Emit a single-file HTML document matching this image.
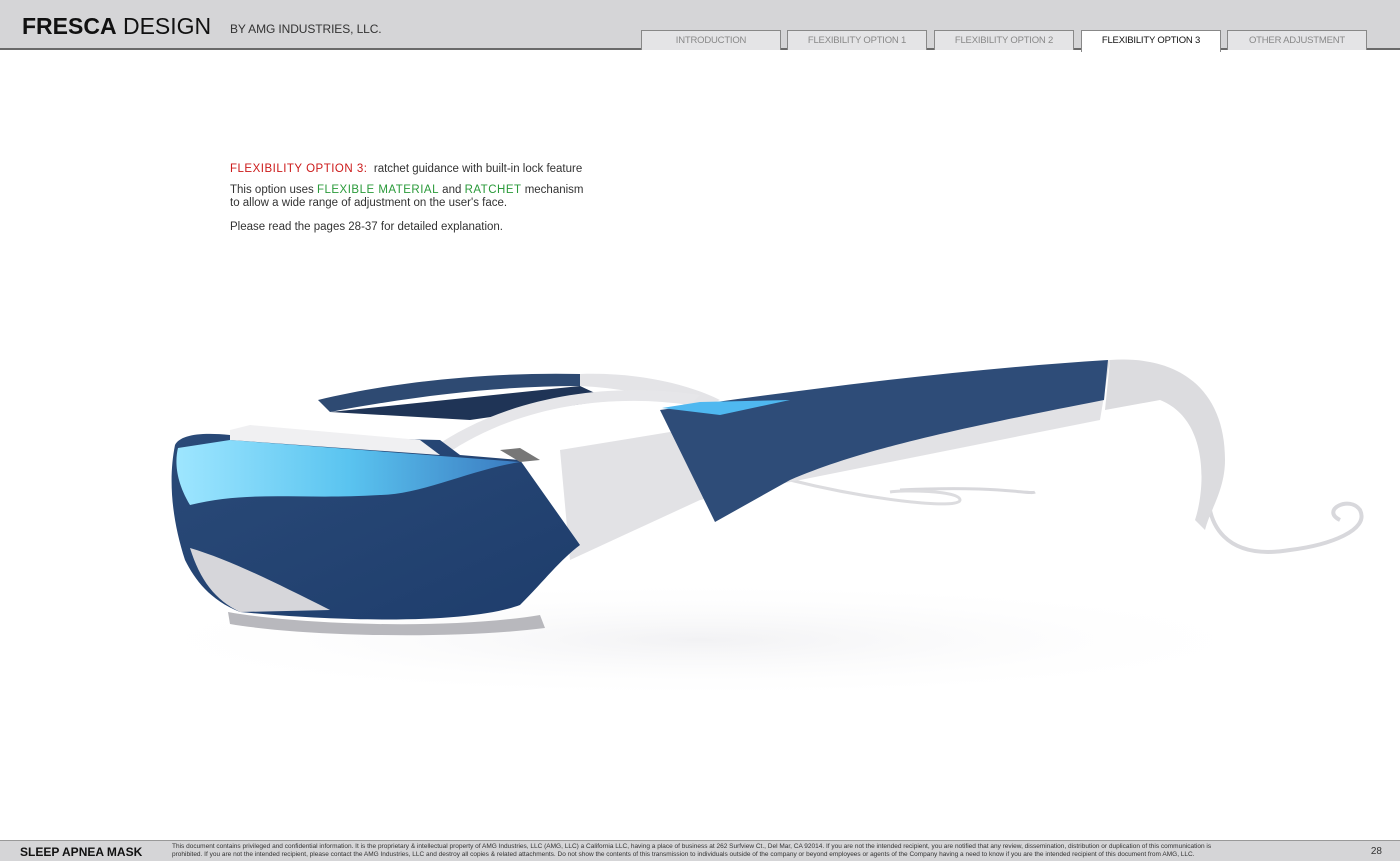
<!DOCTYPE html>
<html><head><meta charset="utf-8"><style>
*{margin:0;padding:0;box-sizing:border-box}
body{width:1400px;height:861px;overflow:hidden;background:#fff;font-family:"Liberation Sans",sans-serif;position:relative}
#hdr{position:absolute;left:0;top:0;width:1400px;height:50px;background:#d5d5d7;border-bottom:2px solid #6a6a6a}
#logo{position:absolute;left:22px;top:13px;font-size:23px;color:#111;letter-spacing:0}
#logo b{font-weight:bold}
#by{position:absolute;left:230px;top:22px;font-size:12px;color:#333;letter-spacing:-0.1px}
.tab{position:absolute;top:30px;height:20px;width:140px;background:#e4e4e6;border:1px solid #888;border-bottom:none;font-size:9.5px;color:#888;text-align:center;line-height:20px;letter-spacing:-0.2px}
.tab.on{background:#fff;color:#111;height:22px}
#txt{position:absolute;left:230px;top:163px;font-size:11.5px;color:#333;line-height:13px}
.r{color:#cc1a1a;letter-spacing:.5px}.g{color:#2a9a3a;letter-spacing:.5px}
#ftr{position:absolute;left:0;top:840px;width:1400px;height:21px;background:#d5d5d7;border-top:1px solid #999}
#ft1{position:absolute;left:20px;top:4px;font-size:12px;font-weight:bold;color:#111}
#ft2{position:absolute;left:172px;top:2px;font-size:6.5px;color:#333;line-height:7.5px;white-space:nowrap}
#pg{position:absolute;right:18px;top:5px;font-size:10px;color:#333}
</style></head><body>
<div id="hdr">
<div id="logo"><b>FRESCA</b> DESIGN</div>
<div id="by">BY AMG INDUSTRIES, LLC.</div>
<div class="tab" style="left:641px">INTRODUCTION</div>
<div class="tab" style="left:787px">FLEXIBILITY OPTION 1</div>
<div class="tab" style="left:934px">FLEXIBILITY OPTION 2</div>
<div class="tab on" style="left:1081px">FLEXIBILITY OPTION 3</div>
<div class="tab" style="left:1227px">OTHER ADJUSTMENT</div>
</div>
<div id="txt">
<div><span class="r">FLEXIBILITY OPTION 3:</span>&nbsp; ratchet guidance with built-in lock feature</div>
<div style="margin-top:8px">This option uses <span class="g">FLEXIBLE MATERIAL</span> and <span class="g">RATCHET</span> mechanism<br>to allow a wide range of adjustment on the user's face.</div>
<div style="margin-top:11px">Please read the pages 28-37 for detailed explanation.</div>
</div>
<svg style="position:absolute;left:0;top:0" width="1400" height="861">
<defs>
<linearGradient id="bl" x1="0" y1="0" x2="1" y2="1"><stop offset="0" stop-color="#2a4a78"/><stop offset="1" stop-color="#1e3d6c"/></linearGradient>
<linearGradient id="lb" x1="0" y1="0" x2="1" y2="0"><stop offset="0" stop-color="#9ee6ff"/><stop offset=".5" stop-color="#5ac4f0"/><stop offset="1" stop-color="#3a7ac0"/></linearGradient>
<radialGradient id="sh" cx=".5" cy=".5" r=".5"><stop offset="0" stop-color="#f2f2f4"/><stop offset="1" stop-color="#fff" stop-opacity="0"/></radialGradient>
</defs>
<ellipse cx="700" cy="640" rx="600" ry="60" fill="url(#sh)"/>
<path d="M1210 470 C1200 530 1230 560 1290 550 C1330 545 1370 530 1360 510 C1350 495 1320 510 1340 520" fill="none" stroke="#d8d8dc" stroke-width="4"/>
<path d="M900 490 C1000 485 1030 495 1035 492" fill="none" stroke="#d8d8dc" stroke-width="3"/>
<path d="M790 480 C870 500 960 510 960 500 C960 490 900 490 890 492" fill="none" stroke="#dcdcdf" stroke-width="3"/>
<path d="M318 400 C400 380 500 372 580 374 L580 386 C500 386 420 395 330 412 Z" fill="#2e4a72"/>
<path d="M580 374 C640 372 690 385 720 400 L700 410 C660 395 620 388 580 386 Z" fill="#e4e4e7"/>
<path d="M330 412 L580 386 L610 400 L470 420 Z" fill="#1f3456"/>
<path d="M430 450 C500 400 600 380 700 395 L690 405 C600 392 510 410 445 455 Z" fill="#e6e6e9"/>
<path d="M560 450 L1110 360 L1100 420 L700 500 L570 560 Z" fill="#e2e2e5"/>
<path d="M1110 360 C1180 355 1225 390 1225 460 C1225 490 1210 510 1205 530 L1195 520 C1205 490 1210 420 1160 400 L1105 410 Z" fill="#dcdcdf"/>
<path d="M660 410 C800 390 950 370 1108 360 L1104 400 C950 430 860 450 790 480 L715 522 L660 410 Z" fill="#2e4c78"/>
<path d="M662 408 L700 402 L790 400 L720 415 Z" fill="#4fb8f0"/>
<path d="M175 445 C180 435 200 432 230 435 L440 440 L460 455 L520 460 L580 545 C560 560 545 580 520 605 C480 620 380 625 240 612 C210 600 195 580 185 560 C172 520 168 480 175 445 Z" fill="url(#bl)"/>
<path d="M178 448 L230 440 L520 462 C470 470 420 495 380 495 C300 500 250 490 190 505 C175 480 175 460 178 448 Z" fill="url(#lb)"/>
<path d="M190 548 C230 560 270 580 330 610 L240 612 C215 600 200 580 190 548 Z" fill="#d6d6da"/>
<path d="M228 612 C300 625 450 630 540 615 L545 628 C450 640 300 636 230 624 Z" fill="#b8b8bd"/>
<path d="M230 430 L250 425 L420 440 L440 455 L230 440 Z" fill="#f0f0f2"/>
<path d="M500 450 L520 462 L540 460 L520 448 Z" fill="#777"/>
</svg>
<div id="ftr">
<div id="ft1">SLEEP APNEA MASK</div>
<div id="ft2">This document contains privileged and confidential information. It is the proprietary &amp; intellectual property of AMG Industries, LLC (AMG, LLC) a California LLC, having a place of business at 262 Surfview Ct., Del Mar, CA 92014. If you are not the intended recipient, you are notified that any review, dissemination, distribution or duplication of this communication is<br>prohibited. If you are not the intended recipient, please contact the AMG Industries, LLC and destroy all copies &amp; related attachments. Do not show the contents of this transmission to individuals outside of the company or beyond employees or agents of the Company having a need to know if you are the intended recipient of this document from AMG, LLC.</div>
<div id="pg">28</div>
</div>
</body></html>
